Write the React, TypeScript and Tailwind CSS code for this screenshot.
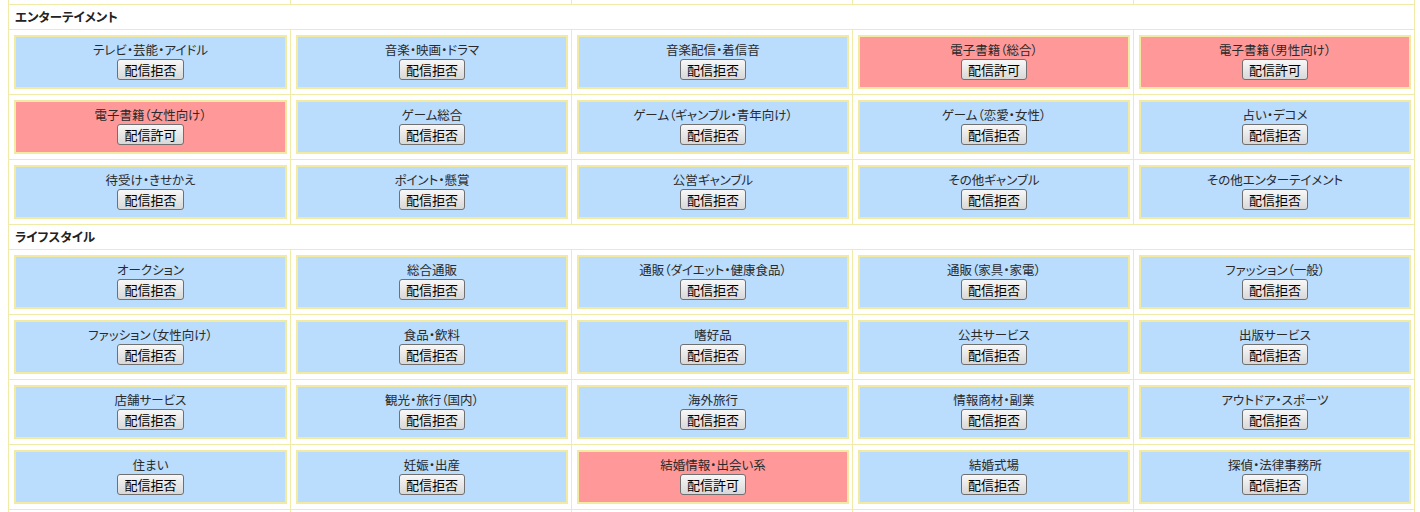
type Item = { label: string; allow?: boolean };

const entertainment: Item[] = [
  { label: 'テレビ・芸能・アイドル' },
  { label: '音楽・映画・ドラマ' },
  { label: '音楽配信・着信音' },
  { label: '電子書籍（総合）', allow: true },
  { label: '電子書籍（男性向け）', allow: true },
  { label: '電子書籍（女性向け）', allow: true },
  { label: 'ゲーム総合' },
  { label: 'ゲーム（ギャンブル・青年向け）' },
  { label: 'ゲーム（恋愛・女性）' },
  { label: '占い・デコメ' },
  { label: '待受け・きせかえ' },
  { label: 'ポイント・懸賞' },
  { label: '公営ギャンブル' },
  { label: 'その他ギャンブル' },
  { label: 'その他エンターテイメント' },
];

const lifestyle: Item[] = [
  { label: 'オークション' },
  { label: '総合通販' },
  { label: '通販（ダイエット・健康食品）' },
  { label: '通販（家具・家電）' },
  { label: 'ファッション（一般）' },
  { label: 'ファッション（女性向け）' },
  { label: '食品・飲料' },
  { label: '嗜好品' },
  { label: '公共サービス' },
  { label: '出版サービス' },
  { label: '店舗サービス' },
  { label: '観光・旅行（国内）' },
  { label: '海外旅行' },
  { label: '情報商材・副業' },
  { label: 'アウトドア・スポーツ' },
  { label: '住まい' },
  { label: '妊娠・出産' },
  { label: '結婚情報・出会い系', allow: true },
  { label: '結婚式場' },
  { label: '探偵・法律事務所' },
];

function Cell({ item }: { item: Item }) {
  return (
    <div className="h-[65px] border-r border-b border-[#f0eca8] pl-[5px] pr-[3px] py-[5px] flex">
      <div
        className={
          'flex-1 border-2 border-[#f2eaa0] flex flex-col items-center pt-[5px] ' +
          (item.allow ? 'bg-[#ff9999]' : 'bg-[#badcfd]')
        }
      >
        <span className="text-[12.5px] leading-[16px] text-[#2a2a2a] [font-feature-settings:'palt']">
          {item.label}
        </span>
        <button className="mt-[1px] h-[21px] px-[6px] rounded-[3px] border border-[#707070] bg-gradient-to-b from-[#f8f8f8] to-[#d8d8d8] text-[13px] leading-[19px] text-black">
          {item.allow ? '配信許可' : '配信拒否'}
        </button>
      </div>
    </div>
  );
}

function Header({ title }: { title: string }) {
  return (
    <div className="col-span-5 h-[25px] border-r border-b border-[#f0eca8] bg-white pl-[6px] flex items-center">
      <span className="text-[12.5px] font-bold text-[#222] [font-feature-settings:'palt']">{title}</span>
    </div>
  );
}

export default function App() {
  return (
    <div
      className="h-[512px] w-[1420px] overflow-hidden bg-white"
      style={{ fontFamily: '"MS UI Gothic", "Noto Sans CJK JP", sans-serif' }}
    >
      <div className="ml-[8px] w-[1407px] border-l border-[#f0eca8] grid grid-cols-[282px_281px_281px_281px_281px]">
        {[0, 1, 2, 3, 4].map((i) => (
          <div key={i} className="h-[5px] border-r border-b border-[#f0eca8]" />
        ))}
        <Header title="エンターテイメント" />
        {entertainment.map((it) => (
          <Cell key={it.label} item={it} />
        ))}
        <Header title="ライフスタイル" />
        {lifestyle.map((it) => (
          <Cell key={it.label} item={it} />
        ))}
        {[0, 1, 2, 3, 4].map((i) => (
          <div key={'b' + i} className="h-[20px] border-r border-[#f0eca8]" />
        ))}
      </div>
    </div>
  );
}
